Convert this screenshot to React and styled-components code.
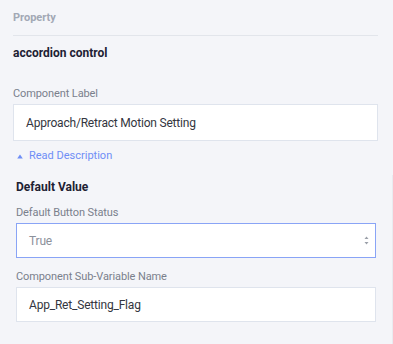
import React from "react";
import styled, { createGlobalStyle } from "styled-components";

const Global = createGlobalStyle`
  html, body { margin: 0; padding: 0; background: #f4f5f9; }
  body { font-family: Roboto, "Noto Sans CJK KR", sans-serif; }
  * { box-sizing: border-box; }
`;

const Panel = styled.div`
  width: 393px;
  height: 344px;
  padding: 8px 15px 0 13px;
  background: #f4f5f9;
  overflow: hidden;
`;

const Header = styled.div`
  font-size: 11px;
  font-weight: 700;
  line-height: 20px;
  color: #a2a8b5;
  margin-bottom: 7px;
`;

const Divider = styled.div`
  height: 1px;
  background: #e2e5eb;
`;

const Title = styled.div`
  font-size: 12px;
  font-weight: 700;
  line-height: 20px;
  color: #1d2133;
  margin-top: ${(p) => p.$mt || 0}px;
`;

const Field = styled.div`
  display: flex;
  flex-direction: column;
  gap: 2px;
  margin-top: ${(p) => p.$mt || 0}px;
`;

const Label = styled.label`
  font-size: 11px;
  line-height: 16px;
  color: #7a808c;
  letter-spacing: -0.1px;
`;

const Box = styled.div`
  height: ${(p) => p.$h}px;
  background: #fff;
  border: 1px solid ${(p) => (p.$focus ? "#89a4f6" : "#dfe4ed")};
  display: flex;
  align-items: center;
  padding: 0 6px 0 12px;
  font-size: 12px;
  letter-spacing: -0.2px;
  color: ${(p) => (p.$muted ? "#8c919b" : "#333640")};
`;

const Value = styled.span`
  flex: 1;
  white-space: nowrap;
`;

const Toggle = styled.div`
  display: flex;
  align-items: center;
  gap: 6px;
  margin-top: 7px;
  margin-left: 4px;
  font-size: 11px;
  line-height: 16px;
  color: #6f8ef6;
`;

const Section = styled.div`
  margin: 11px -15px 0 0;
  padding: 2px 16px 30px 3px;
  border-right: 1px solid #e9ebf0;
`;

const Arrows = () => (
  <svg width="5" height="9" viewBox="0 0 5 9">
    <path d="M2.5 0.5 L4.5 3 L0.5 3 Z" fill="#9a9fa8" />
    <path d="M2.5 8.5 L4.5 6 L0.5 6 Z" fill="#9a9fa8" />
  </svg>
);

const Caret = () => (
  <svg width="6" height="5" viewBox="0 0 6 5">
    <path d="M3 0.5 L5.8 4.5 L0.2 4.5 Z" fill="#6f8ef6" />
  </svg>
);

export default function App() {
  return (
    <>
      <Global />
      <Panel>
        <Header>Property</Header>
        <Divider />
        <Title $mt={7}>accordion control</Title>
        <Field $mt={23}>
          <Label>Component Label</Label>
          <Box $h={37}>
            <Value>Approach/Retract Motion Setting</Value>
          </Box>
        </Field>
        <Toggle>
          <Caret />
          <span>Read Description</span>
        </Toggle>
        <Section>
          <Title>Default Value</Title>
          <Field $mt={8}>
            <Label>Default Button Status</Label>
            <Box $h={35} $focus $muted>
              <Value>True</Value>
              <Arrows />
            </Box>
          </Field>
          <Field $mt={11}>
            <Label>Component Sub-Variable Name</Label>
            <Box $h={35}>
              <Value>App_Ret_Setting_Flag</Value>
            </Box>
          </Field>
        </Section>
      </Panel>
    </>
  );
}
